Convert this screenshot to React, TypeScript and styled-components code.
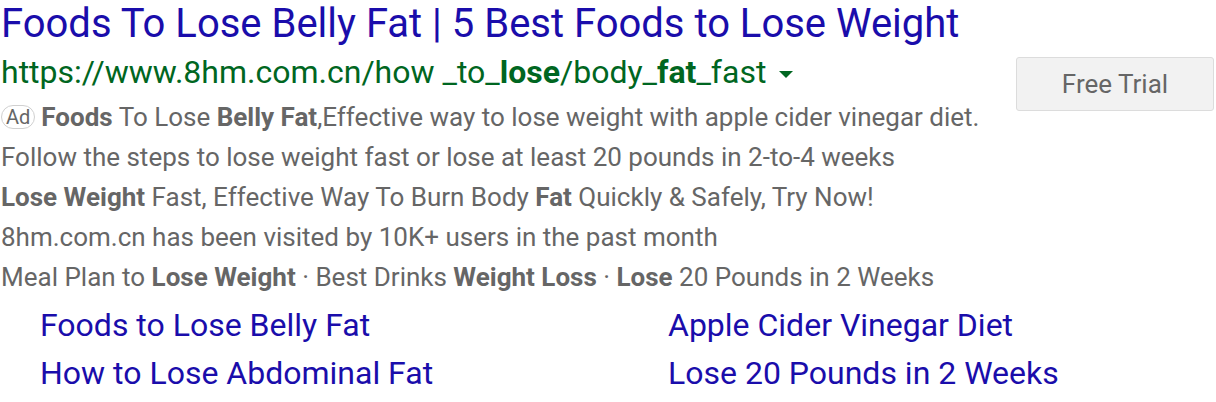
import React from "react";
import styled, { createGlobalStyle } from "styled-components";

const Global = createGlobalStyle`
  html, body { margin: 0; padding: 0; background: #fff; }
  body { font-family: Roboto, "Noto Sans", Arial, sans-serif; }
`;

const Wrap = styled.div`
  width: 1216px;
  height: 402px;
  overflow: hidden;
  padding: 0 0 0 1px;
  box-sizing: border-box;
`;

const Title = styled.a`
  display: block;
  color: #1a0dab;
  font-size: 40px;
  line-height: 48px;
  text-decoration: none;
  white-space: nowrap;
`;

const Body = styled.div`
  display: flex;
  align-items: flex-start;
  justify-content: space-between;
`;

const Main = styled.div`
  display: flex;
  flex-direction: column;
`;

const Url = styled.div`
  display: flex;
  align-items: center;
  color: #006621;
  font-size: 32px;
  line-height: 49px;
  white-space: nowrap;
  b { font-weight: 700; }
`;

const Caret = styled.span`
  display: inline-block;
  width: 0;
  height: 0;
  margin-left: 13px;
  margin-top: 4px;
  border-left: 7px solid transparent;
  border-right: 7px solid transparent;
  border-top: 7px solid #006621;
`;

const Line = styled.div`
  color: #666;
  font-size: 26px;
  line-height: 40px;
  white-space: nowrap;
  b { font-weight: 700; }
`;

const AdBadge = styled.span`
  display: inline-block;
  font-size: 20px;
  line-height: 22px;
  padding: 0 4px;
  border: 1px solid #d0d0d0;
  border-radius: 12px;
  color: #666;
  margin-right: 6px;
  vertical-align: 2px;
`;

const Button = styled.div`
  margin-top: 9px;
  margin-right: 2px;
  width: 198px;
  height: 54px;
  box-sizing: border-box;
  background: #f2f2f2;
  border: 1px solid #dcdcdc;
  border-radius: 3px;
  color: #666;
  font-size: 26px;
  display: flex;
  align-items: center;
  justify-content: center;
`;

const Sitelinks = styled.div`
  display: grid;
  grid-template-columns: 628px auto;
  padding-left: 39px;
  margin-top: 4px;
`;

const Sitelink = styled.a`
  color: #1a0dab;
  font-size: 32px;
  line-height: 48px;
  text-decoration: none;
  white-space: nowrap;
`;

export default function App() {
  return (
    <>
      <Global />
      <Wrap>
        <Title>Foods To Lose Belly Fat | 5 Best Foods to Lose Weight</Title>
        <Body>
          <Main>
            <Url>
              https://www.8hm.com.cn/how _to_<b>lose</b>/body_<b>fat</b>_fast
              <Caret />
            </Url>
            <Line>
              <AdBadge>Ad</AdBadge>
              <b>Foods</b> To Lose <b>Belly Fat</b>,Effective way to lose weight with apple cider vinegar diet.
            </Line>
            <Line>Follow the steps to lose weight fast or lose at least 20 pounds in 2-to-4 weeks</Line>
            <Line>
              <b>Lose Weight</b> Fast, Effective Way To Burn Body <b>Fat</b> Quickly &amp; Safely, Try Now!
            </Line>
            <Line>8hm.com.cn has been visited by 10K+ users in the past month</Line>
            <Line>
              Meal Plan to <b>Lose Weight</b> · Best Drinks <b>Weight Loss</b> · <b>Lose</b> 20 Pounds in 2 Weeks
            </Line>
          </Main>
          <Button>Free Trial</Button>
        </Body>
        <Sitelinks>
          <Sitelink>Foods to Lose Belly Fat</Sitelink>
          <Sitelink>Apple Cider Vinegar Diet</Sitelink>
          <Sitelink>How to Lose Abdominal Fat</Sitelink>
          <Sitelink>Lose 20 Pounds in 2 Weeks</Sitelink>
        </Sitelinks>
      </Wrap>
    </>
  );
}
